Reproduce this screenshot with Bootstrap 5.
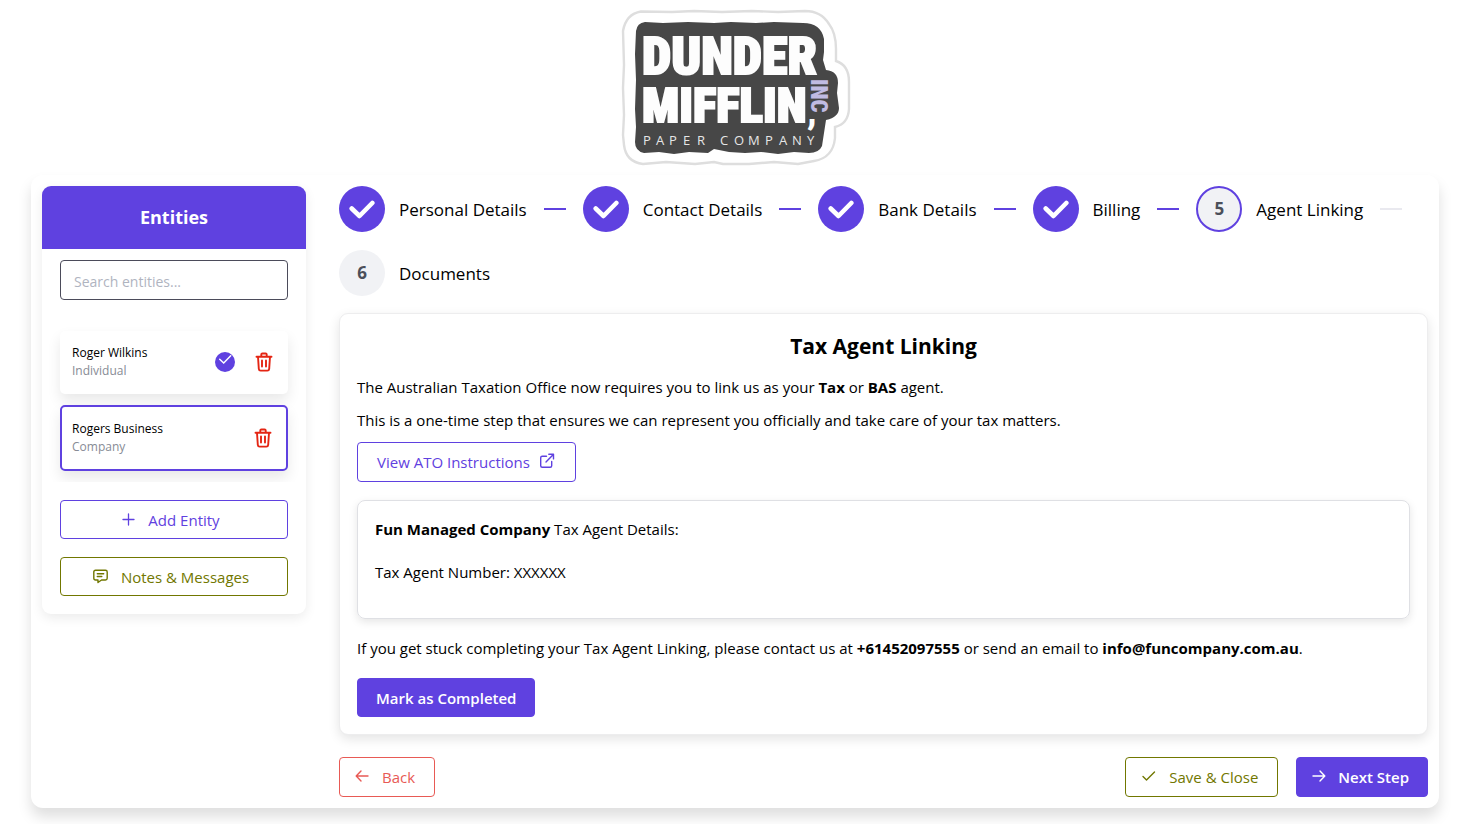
<!DOCTYPE html>
<html lang="en">
<head>
<meta charset="utf-8">
<meta name="viewport" content="width=device-width, initial-scale=1">
<title>Tax Agent Linking</title>
<link href="https://cdn.jsdelivr.net/npm/bootstrap@5.3.0/dist/css/bootstrap.min.css" rel="stylesheet">
<style>
  :root { --brand: #5f41e0; --olive: #717700; --coral: #e85a55; }
  body { font-family: "Open Sans", "Noto Sans", sans-serif; font-size: 15px; line-height: 22px; color: #000; background: #fff; padding-right: 14px; }
  .page-wrap { padding: 0 31px 16px; }
  .brand-logo { display: block; margin: 0 auto; }
  .shell { border-radius: 12px; padding: 11px; gap: 33px; box-shadow: 0 9px 14px rgba(0,0,0,.13); background: #fff; }
  .entities { width: 264px; flex: none; border-radius: 9px; box-shadow: 0 4px 12px rgba(0,0,0,.08); padding-bottom: 18px; }
  .entities-title { background: var(--brand); color: #fff; border-radius: 9px 9px 0 0; font-size: 18px; font-weight: 700; line-height: 27px; padding: 18px; margin: 0; }
  .search-wrap { padding: 11px 18px 0; }
  .search-wrap .form-control { height: 40px; border: 1px solid #4b4b5a; border-radius: 4px; padding: 2px 13px 0; font-size: 14px; }
  .search-wrap .form-control::placeholder { color: #b0b4bf; }
  .entity-list { padding: 11px 18px; margin: 20px 0 18px; gap: 11px; overflow: hidden; }
  .entity { border-radius: 5px; box-shadow: 0 7px 14px rgba(0,0,0,.09); padding: 0 15px 2px 12px; min-height: 63px; font-size: 12px; line-height: 18px; background: #fff; }
  .entity.is-current { border: 2px solid var(--brand); min-height: 66px; padding: 0 14px 0 10px; }
  .entity-kind { color: #878b95; }
  .bin { border: 0; background: none; padding: 0; line-height: 0; margin-left: 20px; }
  .btn { --bs-btn-font-size: 15px; --bs-btn-font-weight: 500; --bs-btn-line-height: 22px; --bs-btn-border-radius: 4px; --bs-btn-padding-x: 19px; display: inline-flex; align-items: center; justify-content: center; height: 40px; padding-top: 2px; padding-bottom: 2px; }
  .btn svg { flex: none; margin-top: -2px; }
  .btn-line { --bs-btn-color: var(--brand); --bs-btn-border-color: var(--brand); --bs-btn-bg: #fff; --bs-btn-hover-color: #fff; --bs-btn-hover-bg: var(--brand); }
  .btn-olive { --bs-btn-color: var(--olive); --bs-btn-border-color: var(--olive); --bs-btn-hover-color: #fff; --bs-btn-hover-bg: var(--olive); }
  .btn-coral { --bs-btn-color: var(--coral); --bs-btn-border-color: var(--coral); --bs-btn-hover-color: #fff; --bs-btn-hover-bg: var(--coral); }
  .btn-brand { --bs-btn-color: #fff; --bs-btn-border-color: var(--brand); --bs-btn-bg: var(--brand); --bs-btn-font-weight: 600; --bs-btn-padding-x: 18px; --bs-btn-hover-color: #fff; --bs-btn-hover-bg: #5033cf; }
  .btn-short { height: 39px; padding-top: 3px; }
  .btn-nav { --bs-btn-padding-x: 15px; padding-right: 19px; gap: 13px; }
  .btn-brand.btn-nav { gap: 12px; padding-right: 18px; }
  .btn-side { gap: 13px; }
  .btn-side svg { margin-left: -6px; }
  .side-actions { padding: 0 18px; gap: 18px; }
  .steps { gap: 18px 17px; padding: 0; margin: 0 0 17px; font-size: 17px; font-weight: 500; }
  .step-dot { width: 46px; height: 46px; border-radius: 50%; margin-right: 14px; background: #f1f2f5; color: #4b4f5a; font-weight: 700; }
  .step-dot.is-done { background: var(--brand); }
  .step-dot.is-active { border: 2px solid var(--brand); }
  .step-line { width: 22px; height: 2px; margin-left: 17px; background: var(--brand); }
  .step-line.is-ahead { background: #e9e9ef; }
  .step-name { padding-top: 1px; }
  .panel { border: 1px solid #ededee; border-radius: 9px; box-shadow: 0 4px 12px rgba(0,0,0,.11); padding: 17px; background: #fff; }
  .panel h1 { font-size: 21px; font-weight: 700; line-height: 30px; margin-bottom: 15px; }
  .panel p { margin-bottom: 11px; }
  .agent-box { border: 1px solid #dfe0e4; border-radius: 8px; box-shadow: 0 3px 8px rgba(0,0,0,.1); padding: 17px 17px 35px; margin: 18px 0; }
  .agent-box p:first-child { margin-bottom: 21px; }
  .agent-box p:last-child { margin-bottom: 0; }
  .panel .help { margin-bottom: 19px; }
  .foot { margin-top: 22px; gap: 18px; }
</style>
</head>
<body>
<svg width="0" height="0" class="position-absolute" aria-hidden="true">
  <defs>
    <symbol id="i-bin" viewBox="0 0 18 20"><g fill="none" stroke="#e42513" stroke-width="1.900" stroke-linecap="round" stroke-linejoin="round"><path d="M1.500 4.700h15M3 4.700l.8 12.100q.2 1.800 1.800 1.800h6.800q1.600 0 1.800-1.800L15 4.700M6.300 4.500V2.600q0-1.100 1.100-1.100h3.200q1.100 0 1.100 1.100v1.900M7 8.500v6M11 8.500v6"/></g></symbol>
    <symbol id="i-tick" viewBox="0 0 26 19"><path d="M2.700 8.500 10.500 16 23.300 3" fill="none" stroke="#fff" stroke-width="4.600" stroke-linecap="round" stroke-linejoin="round"/></symbol>
  </defs>
</svg>
<div class="page-wrap">
  <svg class="brand-logo" width="250" height="175" viewBox="0 0 250 175" role="img" aria-label="Dunder Mifflin Inc, Paper Company">
    <path d="M31 11.500 62 12 84 11 112 12 142 11 168 12 195 11Q211 11 219 24 226 33 226 49V61Q239 65 239 82V109Q238 124 225 127V138Q223 158 204 161L188 164 164 162 139 164 113 164 104 162 85 164 56 162 33 164Q16 162 14 145L13 135 14 115 13 88 14 65 13 31Q16 14 31 11.500Z" fill="#fff" stroke="#dedede" stroke-width="2.400"/>
    <path d="M35 22 53 23 78 22 104 23 121 22 146 23 164 22 193 23Q211 23 214 39L214 52 213 60 216 70Q228 71 228 83L227 93 229 108Q229 117 216 120L214 133 212 146Q209 153 199 153L184 152 168 154 151 152 135 153 119 152 104 149 98 153 79 152 64 154 49 152 34 153Q25 151 25 142L26 127 25 109 26 80 25 54 26 31Q27 23 35 22Z" fill="#474747"/>
    <g font-family="'Roboto Condensed',Roboto,sans-serif" font-weight="900" fill="#fdfdfd" stroke="#fdfdfd" stroke-width="2">
      <text x="32" y="74" font-size="52">DUNDER</text>
      <text x="32" y="122" font-size="49">MIFFLIN</text>
      <text x="197" y="124" font-size="36" stroke="none">,</text>
    </g>
    <text transform="translate(201 79) rotate(90)" font-family="'Roboto Condensed',Roboto,sans-serif" font-weight="900" font-size="23" fill="#c0bbe2">INC</text>
    <g fill="#e6e6e6" font-family="'Open Sans',sans-serif" font-size="13"><text y="144.500" x="33 46 59 73 87 110 124 138 155 169 182 197">PAPERCOMPANY</text></g>
  </svg>

  <div class="shell d-flex align-items-start">
    <aside class="entities">
      <h2 class="entities-title text-center">Entities</h2>
      <div class="search-wrap">
        <input class="form-control" type="text" placeholder="Search entities..." aria-label="Search entities">
      </div>
      <ul class="entity-list list-unstyled d-flex flex-column">
        <li class="entity d-flex align-items-center">
          <div class="me-auto"><div>Roger Wilkins</div><div class="entity-kind">Individual</div></div>
          <svg width="20" height="20" viewBox="0 0 20 20" role="img" aria-label="Complete"><circle cx="10" cy="10" r="10" fill="#5f41e0"/><path d="m4.700 7.200 4 3.800 7-7.200" fill="none" stroke="#fff" stroke-width="1.500" stroke-linecap="round"/></svg>
          <button class="bin" type="button" aria-label="Delete Roger Wilkins"><svg width="18" height="20"><use href="#i-bin"/></svg></button>
        </li>
        <li class="entity is-current d-flex align-items-center">
          <div class="me-auto"><div>Rogers Business</div><div class="entity-kind">Company</div></div>
          <button class="bin" type="button" aria-label="Delete Rogers Business"><svg width="18" height="20"><use href="#i-bin"/></svg></button>
        </li>
      </ul>
      <div class="side-actions d-grid">
        <button class="btn btn-line btn-short btn-side" type="button"><svg width="13" height="13" viewBox="0 0 13 13"><path d="M6.500 1v11M1 6.500h11" stroke="currentColor" stroke-width="1.300" stroke-linecap="round"/></svg>Add Entity</button>
        <button class="btn btn-olive btn-short btn-side" type="button"><svg width="15" height="15" viewBox="0 0 15 15"><g fill="none" stroke="currentColor" stroke-width="1.400" stroke-linecap="round" stroke-linejoin="round"><path d="M2.500 1.200h10q1.700 0 1.700 1.700v6.400q0 1.700-1.700 1.700H8.500L5 13.500V11H2.500Q.800 11 .800 9.300V2.900q0-1.700 1.700-1.700ZM4.300 4.800h6.400M4.300 7.500h4.500"/></g></svg>Notes &amp; Messages</button>
      </div>
    </aside>

    <main class="flex-grow-1">
      <ol class="steps list-unstyled d-flex flex-wrap">
        <li class="d-flex align-items-center"><span class="step-dot is-done d-flex align-items-center justify-content-center"><svg width="26" height="19"><use href="#i-tick"/></svg></span><span class="step-name">Personal Details</span><span class="step-line"></span></li>
        <li class="d-flex align-items-center"><span class="step-dot is-done d-flex align-items-center justify-content-center"><svg width="26" height="19"><use href="#i-tick"/></svg></span><span class="step-name">Contact Details</span><span class="step-line"></span></li>
        <li class="d-flex align-items-center"><span class="step-dot is-done d-flex align-items-center justify-content-center"><svg width="26" height="19"><use href="#i-tick"/></svg></span><span class="step-name">Bank Details</span><span class="step-line"></span></li>
        <li class="d-flex align-items-center"><span class="step-dot is-done d-flex align-items-center justify-content-center"><svg width="26" height="19"><use href="#i-tick"/></svg></span><span class="step-name">Billing</span><span class="step-line"></span></li>
        <li class="d-flex align-items-center"><span class="step-dot is-active d-flex align-items-center justify-content-center">5</span><span class="step-name">Agent Linking</span><span class="step-line is-ahead"></span></li>
        <li class="d-flex align-items-center"><span class="step-dot d-flex align-items-center justify-content-center">6</span><span class="step-name">Documents</span></li>
      </ol>

      <section class="panel">
        <h1 class="text-center">Tax Agent Linking</h1>
        <p>The Australian Taxation Office now requires you to link us as your <b>Tax</b> or <b>BAS</b> agent.</p>
        <p>This is a one-time step that ensures we can represent you officially and take care of your tax matters.</p>
        <a class="btn btn-line" href="#instructions">View ATO Instructions<svg class="ms-2" width="18" height="16" viewBox="0 0 18 16"><g fill="none" stroke="currentColor" stroke-width="1.400" stroke-linecap="round" stroke-linejoin="round"><path d="M8.500 3.200H4.200q-1.500 0-1.500 1.500v8q0 1.500 1.500 1.500h8q1.500 0 1.500-1.500V8.500M8 9l7.300-7.500M10.800 1.200h4.700v4.700"/></g></svg></a>
        <div class="agent-box">
          <p><b>Fun Managed Company</b> Tax Agent Details:</p>
          <p>Tax Agent Number: XXXXXX</p>
        </div>
        <p class="help">If you get stuck completing your Tax Agent Linking, please contact us at <b>+61452097555</b> or send an email to <b>info@funcompany.com.au</b>.</p>
        <button class="btn btn-brand btn-short" type="button">Mark as Completed</button>
      </section>

      <div class="foot d-flex">
        <button class="btn btn-coral btn-nav me-auto" type="button"><svg width="14" height="12" viewBox="0 0 14 12"><path d="M6 1 1.200 6 6 11M1.500 6H13" fill="none" stroke="currentColor" stroke-width="1.400" stroke-linecap="round" stroke-linejoin="round"/></svg>Back</button>
        <button class="btn btn-olive btn-nav" type="button"><svg width="15" height="12" viewBox="0 0 15 12"><path d="m2 6.500 3.500 3.500L13.500 2" fill="none" stroke="currentColor" stroke-width="1.400" stroke-linecap="round" stroke-linejoin="round"/></svg>Save &amp; Close</button>
        <button class="btn btn-brand btn-nav" type="button"><svg width="14" height="12" viewBox="0 0 14 12"><path d="m8 1 4.800 5L8 11M12.500 6H1" fill="none" stroke="currentColor" stroke-width="1.400" stroke-linecap="round" stroke-linejoin="round"/></svg>Next Step</button>
      </div>
    </main>
  </div>
</div>
<script src="https://cdn.jsdelivr.net/npm/bootstrap@5.3.0/dist/js/bootstrap.bundle.min.js"></script>
</body>
</html>
